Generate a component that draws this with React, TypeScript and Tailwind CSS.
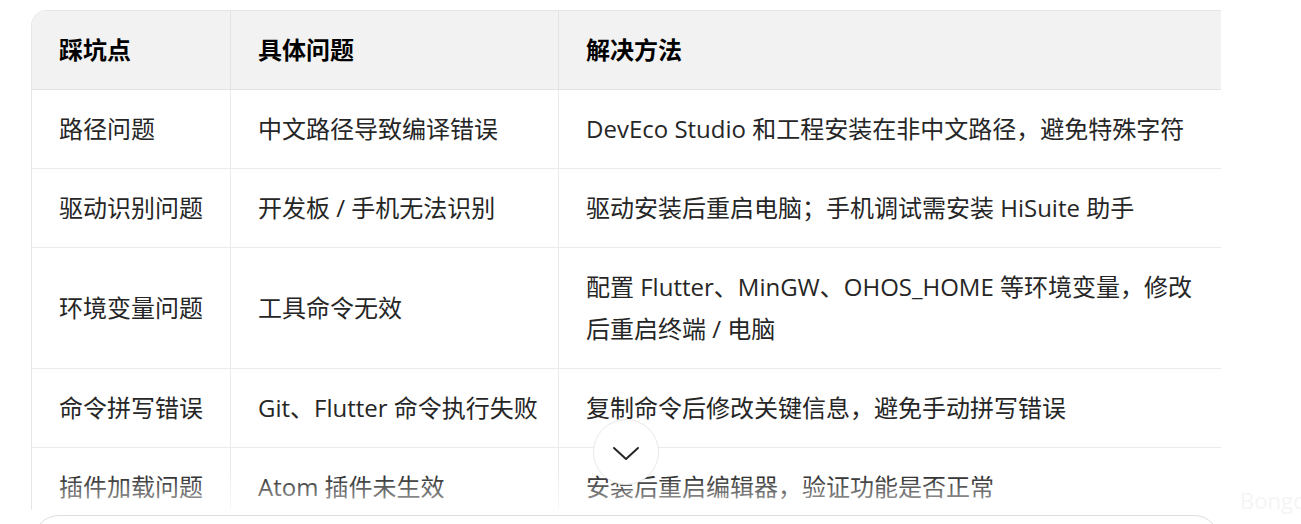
const rows: [string, string, React.ReactNode][] = [
  ["路径问题", "中文路径导致编译错误", "DevEco Studio 和工程安装在非中文路径，避免特殊字符"],
  ["驱动识别问题", "开发板 / 手机无法识别", "驱动安装后重启电脑；手机调试需安装 HiSuite 助手"],
  [
    "环境变量问题",
    "工具命令无效",
    <>
      配置 Flutter、MinGW、OHOS_HOME 等环境变量，修改
      <br />
      后重启终端 / 电脑
    </>,
  ],
  ["命令拼写错误", "Git、Flutter 命令执行失败", "复制命令后修改关键信息，避免手动拼写错误"],
  ["插件加载问题", "Atom 插件未生效", "安装后重启编辑器，验证功能是否正常"],
];

const font = { fontFamily: '"Open Sans", "Noto Sans CJK SC", sans-serif' };

export default function App() {
  return (
    <div className="relative h-[524px] w-[1301px] overflow-hidden bg-white" style={font}>
      <div className="pl-[31px] pt-[10px]">
        {/* scrolling table area */}
        <div className="relative h-[500px] w-[1190px] overflow-hidden rounded-tl-[16px] border-l border-t border-[#e6e6e6]">
          <div className="grid w-[1197px] grid-cols-[199px_328px_670px] text-[24px] leading-[42px] text-[#262626]">
            {["踩坑点", "具体问题", "解决方法"].map((h) => (
              <div
                key={h}
                className="border-b border-r border-[#e3e3e3] bg-[#f2f2f2] py-[18px] pl-[27px] font-bold text-black"
              >
                {h}
              </div>
            ))}
            {rows.map((r, i) =>
              r.map((c, j) => (
                <div
                  key={`${i}-${j}`}
                  className="flex items-center border-b border-r border-[#ebebeb] py-[18px] pl-[27px] whitespace-nowrap"
                >
                  <span>{c}</span>
                </div>
              ))
            )}
          </div>
          {/* bottom fade */}
          <div className="pointer-events-none absolute bottom-0 left-0 right-0 h-[36px] bg-linear-to-b from-white/0 to-white/70" />
        </div>

        {/* input box peeking in at the bottom */}
        <div className="ml-[2px] mt-[5px] h-[40px] w-[1187px] rounded-t-[26px] border border-[#dedede] bg-white" />
      </div>

      {/* scroll-down button */}
      <button className="absolute left-[593px] top-[419px] flex h-[66px] w-[66px] items-center justify-center rounded-full border border-[#e8e8e8] bg-white">
        <svg width="28" height="16" viewBox="0 0 28 16" fill="none" stroke="#262626" strokeWidth="2" strokeLinecap="round" strokeLinejoin="round" className="mt-[1px]">
          <polyline points="2,3 14,14 26,3" />
        </svg>
      </button>

      {/* watermark */}
      <div className="absolute left-[1240px] top-[484px] text-[22px] whitespace-nowrap text-[#f5f5f5]">BongoCat</div>
    </div>
  );
}
